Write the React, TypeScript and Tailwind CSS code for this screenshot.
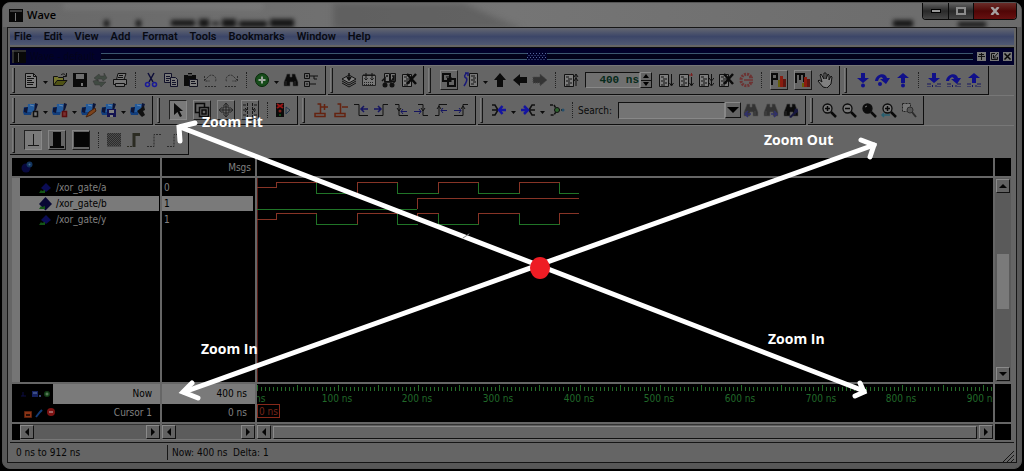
import type { ReactNode } from 'react';

const MENUS = ['File', 'Edit', 'View', 'Add', 'Format', 'Tools', 'Bookmarks', 'Window', 'Help'];

// x position of one nanosecond on the time axis
const PX_PER_NS = 0.8065;

const doc = (
  <g>
    <path d="M2.5 1.5h8l3 3v11h-11z" fill="#7d7d7d" stroke="#111" />
    <path d="M10.5 1.5v3h3M4 4.5h4M4 6.5h7M4 8.5h5M4 10.5h7M4 12.5h6" fill="none" stroke="#111" />
  </g>
);
const page = (
  <g>
    <path d="M1.5 2.5h9v12h-9z" fill="#7d7d7d" stroke="#111" />
    <path d="M3 5h3M5 7h4M3 9h4M5 11h4M3 13h4" stroke="#111" />
  </g>
);
const cube = (
  <g>
    <path d="M1 5h9l-2 8H1l-1-3z" fill="#123e7c" />
    <path d="M5 2h7l-1 8H4z" fill="#235a9b" />
    <path d="M12 1l3 1-2 6-2 2zM1 6l4-1-1 6-3-1z" fill="#0c1436" />
    <path d="M7 3l4 1" stroke="#6489b3" />
  </g>
);
const lens = (
  <g>
    <circle cx="6.5" cy="6.5" r="4.5" fill="#777" stroke="#0b0b0b" strokeWidth="1.3" />
    <path d="M10 10l5 5" stroke="#0b0b0b" strokeWidth="2.5" />
  </g>
);
const binoculars = (
  <path d="M4 2h3v3h2V2h3l1 3 2 5v4h-5v-4H7v4H1v-4l2-5zM3 9v4M12 9v4" fill="#0b0b0b" stroke="#444" strokeWidth=".6" />
);
const step = <path d="M6 1h4v5h4l-6 5-6-5h4z" fill="#10108a" />;
const stepOver = (
  <path d="M0 9C1 1 11 0 12 6h3l-4 6-6-5h3C7 4 4 5 3 9z" fill="#10108a" />
);
const up = <path d="M6 11V6H2l6-5 6 5h-4v5z" fill="#10108a" />;
const bits = <path d="M2 11v4M4 11v4M6.500 13v2M10 13v2M12 11v4M14 11v4" stroke="#161660" strokeDasharray="2 1" />;

const ICONS: Record<string, ReactNode> = {
  doc,
  open: (
    <g>
      <path d="M1.500 13V4.500h4l1 1h5V8" fill="#75752e" stroke="#111" />
      <path d="M1.500 13.500L5 8.500h10l-4 5z" fill="#4f5214" stroke="#111" />
      <path d="M9 3c2-2 4-1 5 1M14.500 1v3.500H11" fill="none" stroke="#111" />
    </g>
  ),
  save: (
    <g>
      <path d="M1 1h14v14H1z" fill="#0b0b0b" />
      <path d="M4 2h8v5H4z" fill="#6f6f6f" />
      <path d="M9 11h2v3H9z" fill="#777" />
    </g>
  ),
  refresh: <path d="M2 6l5-4 1 2h4V1l3 5-4 3-1-2H6v2zM14 10l-5 5-1-2H3l-2-4 5-1 1 2h4z" fill="#404a42" stroke="#363636" strokeWidth=".5" />,
  print: (
    <g stroke="#111" fill="#777">
      <path d="M4.500 7.500l1.500-6h8l-2 6z" />
      <path d="M1.500 7.500h13v5h-13z" />
      <path d="M3.500 11.500h9v3h-9zM7 3.500h4M6 5.500h5" />
    </g>
  ),
  cut: (
    <g fill="none">
      <path d="M5 1l5 9M11 1L6 10" stroke="#0d0d38" strokeWidth="1.500" />
      <circle cx="4.500" cy="12.500" r="2" stroke="#1a1a99" strokeWidth="1.500" />
      <circle cx="11.500" cy="12.500" r="2" stroke="#1a1a99" strokeWidth="1.500" />
    </g>
  ),
  copy: (
    <g stroke="#101028" fill="#787878">
      <path d="M1.500 1.500h7v9h-7zM3 4.500h4M3 6.500h4M3 8.500h3" />
      <path d="M7.500 5.500h5l2 2v7h-7zM9 8.500h3M9 10.500h4M9 12.500h4" />
    </g>
  ),
  paste: (
    <g>
      <path d="M1 3h4V1h4v2h4v11H1z" fill="#0b0b0b" />
      <path d="M5 3h4" stroke="#888" />
      <path d="M6.500 7.500h8v7h-8zM8 9.500h4M8 11.500h5" fill="#7d7d7d" stroke="#10101c" />
    </g>
  ),
  undo: <path d="M1.500 4v5h5M2 8l4-4c4-3 9 2 6 6M2 14.500h12" fill="none" stroke="#2d2d2d" strokeDasharray="2 1" />,
  redo: <path d="M14.500 4v5h-5M14 8l-4-4C6 1 1 6 4 10M2 14.500h12" fill="none" stroke="#2d2d2d" strokeDasharray="2 1" />,
  plus: (
    <g>
      <circle cx="8" cy="8" r="6.500" fill="#174d1b" stroke="#062808" />
      <path d="M8 4.500v7M4.500 8h7" stroke="#a0a8a0" strokeWidth="2" />
    </g>
  ),
  find: binoculars,
  tree: <path d="M1.500 1.500h5v5h-5zM1.500 9.500h5v5h-5zM3 4h2M4 3v2M3 12h2M7 4h8M7 12h6M11 4v3h3" fill="none" stroke="#111" />,
  stack: (
    <g stroke="#111">
      <path d="M1 11l7 4 7-4M1 9l7 4 7-4" fill="none" />
      <path d="M1 7l7-4 7 4-7 4z" fill="#808080" />
      <path d="M8 1v6M6 5l2 3 2-3" fill="none" strokeWidth="1.500" />
    </g>
  ),
  calendar: (
    <g>
      <path d="M1.500 3.500h13v10h-13z" fill="#777" stroke="#222" />
      <path d="M2 3h12M5 1v5M11 1v5M3.500 6l1.500 2 1.500-2M9.500 6l1.500 2 1.500-2" stroke="#111" fill="none" />
      <path d="M3 10.500h10M3 12.500h10" stroke="#222" strokeDasharray="1 1" />
    </g>
  ),
  sheets: (
    <g>
      <path d="M3.500 1.500h5v8h-5zM9.500 1.500h5v8h-5z" fill="#777" stroke="#111" />
      <path d="M1 9l3-3v4h6l3-5v6M5 4h2M11 4h2" fill="none" stroke="#111" strokeWidth="1.500" />
      <circle cx="4" cy="13" r="2.500" fill="#111" />
      <circle cx="11" cy="13" r="2.500" fill="#111" />
    </g>
  ),
  stop: (
    <g>
      {page}
      <path d="M6 2l9 10M15 2L6 12" stroke="#0b0b0b" strokeWidth="2.500" />
    </g>
  ),
  windows: (
    <g fill="none" stroke="#0b0b0b" strokeWidth="2">
      <path d="M2 2h7v7H2z" />
      <path d="M7 7h7v7H7z" />
      <path d="M5 5h5v5" strokeWidth="1" />
    </g>
  ),
  restart: (
    <g>
      <path d="M6.500 1.500h8v13h-8z" fill="#777" stroke="#111" />
      <path d="M8 4h4M10 6h3M8 8h4M10 10h3M8 12h3" stroke="#111" />
      <path d="M4 1C1 3 1 5 3 6S3 11 1 14M2 1h3v3" fill="none" stroke="#191978" strokeWidth="1.500" />
    </g>
  ),
  arrowUp: <path d="M5 15V8H2l6-7 6 7h-3v7z" fill="#0b0b0b" />,
  arrowLeft: <path d="M15 5v6H8v3L1 8l7-6v3z" fill="#0b0b0b" />,
  arrowRight: <path d="M1 5v6h7v3l7-6-7-6v3z" fill="#343434" stroke="#484848" strokeDasharray="1 1" />,
  runTop: (
    <g>
      {page}
      <path d="M13 14V3M11 5l2-3 2 3M11 9l2-3 2 3" fill="none" stroke="#111" />
    </g>
  ),
  run: (
    <g>
      {page}
      <path d="M13.500 2v11M11.500 11l2 3 2-3" fill="none" stroke="#111" />
    </g>
  ),
  runRed: (
    <g>
      {page}
      <path d="M13.500 5v8M11.500 11l2 3 2-3" fill="none" stroke="#111" />
      <path d="M13.500 1v3M11 3h4" stroke="#7a2020" />
    </g>
  ),
  runAll: (
    <g>
      {page}
      <path d="M13.500 2v11M11 6l2.500 3L16 6M11 11l2.500 3 2.500-3" fill="none" stroke="#111" />
    </g>
  ),
  breakRun: (
    <g fill="none" stroke="#6d3333">
      <path d="M13 5C11 0 3 2 3 8s7 8 10 3" strokeWidth="3" strokeDasharray="2 1" />
      <path d="M6 8h9M11 5.500h4M11 10.500h4" strokeWidth="1.500" />
    </g>
  ),
  profile: (
    <g>
      <path d="M1 13V2h5v5H2" fill="none" stroke="#0b0b0b" strokeWidth="2" />
      <path d="M7 15V8h2v7z" fill="#655e0b" />
      <path d="M9 15V4h3v11z" fill="#8a1c10" />
      <path d="M12 15V7h3v8z" fill="#5d1712" />
    </g>
  ),
  memory: (
    <g>
      <path d="M1 11V2h8v8M5 2v6" fill="none" stroke="#0b0b0b" strokeWidth="2" />
      <path d="M7 15v-4h2v4z" fill="#655e0b" />
      <path d="M9 15V5h3v10z" fill="#8a1c10" />
      <path d="M12 15V7h3v8z" fill="#5d1712" />
    </g>
  ),
  hand: <path d="M6 15L1 9l1-1 3 2-2-7 1-1 3 5V1h2v6l2-5 1 1v5l2-4 1 1-1 7-4 4z" fill="#808080" stroke="#111" />,
  stepInto: (
    <g>
      {step}
      <circle cx="8" cy="13.500" r="2" fill="#10108a" />
    </g>
  ),
  stepOver: (
    <g>
      {stepOver}
      <circle cx="5" cy="12" r="2" fill="#10108a" />
    </g>
  ),
  stepOut: (
    <g>
      {up}
      <circle cx="8" cy="13.500" r="2" fill="#10108a" />
    </g>
  ),
  bitsInto: <g>{step}{bits}</g>,
  bitsOver: <g>{stepOver}{bits}</g>,
  bitsOut: <g>{up}{bits}</g>,
  cubeDoc: (
    <g>
      {cube}
      <path d="M10.500 9.500h4v5h-4z" fill="#777" stroke="#111" strokeWidth="1.500" />
    </g>
  ),
  cubeRed: (
    <g>
      {cube}
      <path d="M10.500 9.500h4v5h-4z" fill="#7a3030" stroke="#5b0e0e" strokeWidth="1.500" />
    </g>
  ),
  cubeEdit: (
    <g>
      {cube}
      <path d="M5 15l3-5 6-4 1 3-5 4z" fill="#7d431b" stroke="#45210b" />
    </g>
  ),
  cubeSave: (
    <g>
      {cube}
      <path d="M6 7h9v8H6z" fill="#131350" />
      <path d="M8 8h5v3H8zM9 13h3v2H9z" fill="#808080" />
    </g>
  ),
  cubeDark: (
    <g>
      {cube}
      <path d="M7 9l7-5 1 4-2 1 2 4-3 2-2-2z" fill="#111" />
    </g>
  ),
  pointer: <path d="M4 1l9 8H9.500l2.500 5-2 1-2.500-5L4 13z" fill="#0b0b0b" />,
  zoomMode: <path d="M1.500 6V1.500h9V5M5 10.500H1.500V6M5.500 5.500h9v9h-9zM8 8h4v4H8z" fill="none" stroke="#0b0b0b" strokeWidth="1.500" />,
  pan: <path d="M8 1v14M1 8h14M5.500 4L8 1l2.500 3M5.500 12L8 15l2.500-3M4 5.500L1 8l3 2.500M12 5.500L15 8l-3 2.500M5 5h6v6H5z" fill="none" stroke="#262626" />,
  twoCursor: <path d="M5.500 1v14M10.500 1v14M1 3h3M12 3h3M1 8h4M11 8h4M1 13h3M12 13h3M3 6l2 2-2 2M13 6l-2 2 2 2" fill="none" stroke="#161616" strokeDasharray="3 1" />,
  traffic: (
    <g>
      <path d="M1 1h8v14H1z" fill="#0b0b0b" />
      <path d="M2 2l6 4M8 2L2 6" stroke="#991515" strokeWidth="2" />
      <circle cx="5" cy="9" r="1.500" fill="#80211a" />
      <circle cx="5" cy="13" r="1" fill="#155d20" />
      <path d="M11 5l4 3-4 4z" fill="none" stroke="#24384e" />
    </g>
  ),
  cursorAdd: <path d="M2 14.500h10v-3H2zM7.500 11V2h-3M8 5h7M11.500 2v6" fill="none" stroke="#642310" strokeWidth="1.500" />,
  cursorDel: <path d="M2 14.500h10v-3H2zM7.500 11V2h-3M9 5h6" fill="none" stroke="#642310" strokeWidth="1.500" />,
  edgePrev: (
    <g fill="none">
      <path d="M1 2.500h5v11h9" stroke="#111" />
      <path d="M15 7H8M11 4L8 7l3 3" stroke="#151560" strokeWidth="1.500" />
    </g>
  ),
  edgeNext: (
    <g fill="none">
      <path d="M2 13.500h8v-11h5" stroke="#111" />
      <path d="M1 7h7M5 4l3 3-3 3" stroke="#151560" strokeWidth="1.500" />
    </g>
  ),
  fallPrev: (
    <g fill="none">
      <path d="M2 2.500h4v11h9M4 6l2 3 2-3" stroke="#111" />
      <path d="M14 9.500H8M10 7l-2 2.500 2 2.500" stroke="#151560" />
    </g>
  ),
  fallNext: (
    <g fill="none">
      <path d="M5 2.500h5v11h5M8 6l2 3 2-3" stroke="#111" />
      <path d="M1 9.500h7M6 7l2 2.500L6 12" stroke="#151560" />
    </g>
  ),
  risePrev: (
    <g fill="none">
      <path d="M2 13.500h4v-11h8M4 7l2-3 2 3" stroke="#111" />
      <path d="M14 8.500H8M10 6L8 8.500l2 2.500" stroke="#151560" />
    </g>
  ),
  riseNext: (
    <g fill="none">
      <path d="M1 13.500h9v-11h5M8 7l2-3 2 3" stroke="#111" />
      <path d="M1 8.500h7M6 6l2 2.500L6 11" stroke="#151560" />
    </g>
  ),
  driver: (
    <g fill="none" strokeWidth="1.500">
      <path d="M1 3h3l3 5-3 5H1M1 8h5" stroke="#111" />
      <path d="M15 8H8M11.500 4L8 8l3.500 4" stroke="#1515a0" strokeWidth="2.500" />
    </g>
  ),
  reader: (
    <g fill="none" strokeWidth="1.500">
      <path d="M15 3h-3L9 8l3 5h3M10 8h5" stroke="#111" />
      <path d="M1 8h6M4 4l4 4-4 4" stroke="#1515a0" strokeWidth="2.500" />
    </g>
  ),
  trace: (
    <g>
      <path d="M1 3h4l3 5-3 5H1M8 8h6" fill="none" stroke="#111" strokeWidth="1.500" strokeDasharray="3 1" />
      <circle cx="8" cy="8" r="2.500" fill="#2d612d" stroke="#111" />
      <circle cx="14" cy="8" r="1.500" fill="#244e6b" />
    </g>
  ),
  findPrev: (
    <g>
      <g opacity=".55">{binoculars}</g>
      <path d="M8 12H2M5 9l-3 3 3 3" fill="none" stroke="#30306a" strokeWidth="1.500" />
    </g>
  ),
  findNext: (
    <g>
      <g opacity=".55">{binoculars}</g>
      <path d="M8 12h6M11 9l3 3-3 3" fill="none" stroke="#30306a" strokeWidth="1.500" />
    </g>
  ),
  findOpts: (
    <g>
      {binoculars}
      <path d="M6 15l5-5 1-4 2 2 1-2v4l-3 2-4 4z" fill="#17173f" />
    </g>
  ),
  zoomIn: <g>{lens}<path d="M6.500 4v5M4 6.500h5" stroke="#0b0b0b" strokeWidth="1.500" /></g>,
  zoomOut: <g>{lens}<path d="M4 6.500h5" stroke="#0b0b0b" strokeWidth="1.500" /></g>,
  zoomFull: <g>{lens}<circle cx="6.500" cy="6.500" r="4.500" fill="#0b0b0b" /><path d="M4 5l2-1" stroke="#777" /></g>,
  zoomCursor: (
    <g>
      {lens}
      <path d="M6.500 4v5M4 6.500h5" stroke="#0b0b0b" strokeWidth="1.500" />
      <path d="M1 13h8M3 11l-2 2 2 2" fill="none" stroke="#275f70" strokeWidth="1.500" />
    </g>
  ),
  zoomRange: (
    <g>
      <path d="M1.500 1.500h8v8h-8z" fill="#777" stroke="#222" strokeDasharray="2 1" />
      <circle cx="9" cy="8" r="3" fill="#555" stroke="#2d2d2d" />
      <path d="M11 10l4 5" stroke="#2d2d2d" strokeWidth="2" />
    </g>
  ),
  waveLine: <path d="M8.500 2v11M3 13.500h11" stroke="#161616" fill="none" />,
  waveHalf: <path d="M4 0h8v14H4zM1 14h14v2H1z" fill="#060606" />,
  waveFull: <path d="M1 0h15v15H1z" fill="#060606" />,
  hatch: (
    <g>
      <path d="M1 1h14v14H1z" fill="#4c4c4c" />
      <path d="M1 2.500h14M1 4.500h14M1 6.500h14M1 8.500h14M1 10.500h14M1 12.500h14" stroke="#2c2c2c" strokeDasharray="1 1" />
      <path d="M2 1.500h13M2 3.500h13M2 5.500h13M2 7.500h13M2 9.500h13M2 11.500h13M2 13.500h13" stroke="#2c2c2c" strokeDasharray="1 1" />
    </g>
  ),
  edgeThick: (
    <g fill="none" stroke="#2b2b22">
      <path d="M8 15V2.500h6" strokeWidth="3" />
      <path d="M1 14.500h6" strokeDasharray="2 1" />
    </g>
  ),
  edgeDots: <path d="M1 14.500h7v-12h7" fill="none" stroke="#2b2b2b" strokeDasharray="2 1" />,
};

// '|' is a separator, 'v' a drop-down caret, a leading '+' raises the button, '!' presses it
const FILE_TOOLS = ['doc', 'v', 'open', 'save', 'refresh', 'print', '|', 'cut', 'copy', 'paste', 'undo', 'redo', '|', 'plus', 'v', 'find', 'tree'];
const COMPILE_TOOLS = ['stack', 'calendar', 'sheets', 'stop'];
const RUN_TOOLS_LEFT = ['+windows', 'restart', 'v', 'arrowUp', 'arrowLeft', 'arrowRight', '|', 'runTop'];
const RUN_TOOLS_RIGHT = ['run', 'runRed', 'runAll', 'stop', 'breakRun', '|', '+profile', '+memory', 'hand'];
const STEP_TOOLS = ['stepInto', 'stepOver', 'stepOut', '|', 'bitsInto', 'bitsOver', 'bitsOut'];
const BOOKMARK_TOOLS = ['cubeDoc', 'v', 'cubeRed', 'v', 'cubeEdit', 'cubeSave', 'v', 'cubeDark'];
const MODE_TOOLS = ['!pointer', '+zoomMode', '+pan', '+twoCursor', '|', 'traffic'];
const CURSOR_TOOLS = ['cursorAdd', 'cursorDel', 'edgePrev', 'edgeNext', 'fallPrev', 'fallNext', 'risePrev', 'riseNext'];
const TRACE_TOOLS = ['driver', 'v', 'reader', 'v', 'trace', '|'];
const ZOOM_TOOLS = ['zoomIn', 'zoomOut', 'zoomFull', 'zoomCursor', 'zoomRange'];
const EXPAND_TOOLS = ['!waveLine', '+waveHalf', '+waveFull', '|', 'hatch', 'edgeThick', 'edgeDots', 'edgeDots'];

function Icon({ name }: { name: string }) {
  return (
    <svg viewBox="0 0 16 16" className="h-4 w-4 shrink-0" aria-hidden="true">
      {ICONS[name]}
    </svg>
  );
}

function Tools({ items }: { items: string[] }) {
  return (
    <>
      {items.map((item, i) => {
        if (item === '|') {
          return <span key={i} className="mx-[5px] h-4 w-px shrink-0 border-l border-dotted border-[#222]" />;
        }
        if (item === 'v') {
          return (
            <button key={i} type="button" aria-label="More" className="flex h-5 w-[9px] shrink-0 items-center justify-center">
              <svg viewBox="0 0 5 3" className="mt-1 h-[3px] w-[5px]"><path d="M0 0h5L2.500 3z" fill="#0b0b0b" /></svg>
            </button>
          );
        }
        if (item[0] === '+' || item[0] === '!') {
          const name = item.slice(1);
          return (
            <span key={i} className="flex w-6 shrink-0 justify-center">
              <button
                type="button"
                aria-label={name}
                className={
                  item[0] === '+'
                    ? 'flex h-5 w-[18px] items-center justify-center border border-b-[#1a1a1a] border-l-[#858585] border-r-[#1a1a1a] border-t-[#858585]'
                    : 'flex h-5 w-[18px] items-center justify-center border border-b-[#8a8a8a] border-l-[#222] border-r-[#8a8a8a] border-t-[#222] bg-[#7a7a7a]'
                }
              >
                <Icon name={name} />
              </button>
            </span>
          );
        }
        return (
          <button key={i} type="button" aria-label={item} className="flex h-5 w-5 shrink-0 items-center justify-center">
            <Icon name={item} />
          </button>
        );
      })}
    </>
  );
}

function ToolGroup({ children }: { children: ReactNode }) {
  return (
    <div className="mr-0.5 flex h-full shrink-0 items-center border-b border-r border-[#0e0e0e] pr-1">
      <span className="ml-0.5 mr-[6px] h-[25px] w-[3px] border-b border-l border-r border-b-[#161616] border-l-[#7c7c7c] border-r-[#161616]" />
      {children}
    </div>
  );
}

function ArrowButton({ dir }: { dir: 'left' | 'right' | 'up' | 'down' }) {
  const paths = { left: 'M6 0v8L2 4z', right: 'M2 0v8l4-4z', up: 'M0 6h8L4 2z', down: 'M0 2h8L4 6z' };
  return (
    <button
      type="button"
      aria-label={`Scroll ${dir}`}
      className="flex h-[14px] w-[14px] shrink-0 items-center justify-center border border-b-[#111] border-l-[#8a8a8a] border-r-[#111] border-t-[#8a8a8a] bg-[#626262]"
    >
      <svg viewBox="0 0 8 8" className="h-2 w-2"><path d={paths[dir]} fill="#050505" /></svg>
    </button>
  );
}

function HScroll({ solid = false }: { solid?: boolean }) {
  return (
    <div className="flex h-4 flex-1 items-center justify-between border-b border-t border-b-[#777] border-t-[#333] bg-[#5c5c5c]">
      <ArrowButton dir="left" />
      {solid && <span className="mx-0.5 h-[13px] flex-1 border border-b-[#111] border-l-[#8a8a8a] border-r-[#111] border-t-[#8a8a8a] bg-[#656565]" />}
      <ArrowButton dir="right" />
    </div>
  );
}

function SignalIcon({ large = false }: { large?: boolean }) {
  return (
    <svg viewBox="0 0 14 14" className="h-[14px] w-[14px] shrink-0" aria-hidden="true">
      <path d={large ? 'M7.500 0l6.500 7-6.500 6.500L1 7z' : 'M8 2l5 5-5 4-5-4z'} fill={large ? '#080834' : '#0b0c55'} />
      <path d="M1 12l2-3 1 1 3-1v3z" fill="#135416" />
    </svg>
  );
}

const SIGNALS = [
  { name: '/xor_gate/a', value: '0', selected: false },
  { name: '/xor_gate/b', value: '1', selected: true },
  { name: '/xor_gate/y', value: '1', selected: false },
];

function SignalTable() {
  return (
    <div className="flex w-[245px] shrink-0 flex-col">
      <table className="w-full table-fixed border-separate border-spacing-0 leading-[15px] text-[#808080]">
        <colgroup>
          <col className="w-[150px]" />
          <col />
        </colgroup>
        <thead>
          <tr className="h-5">
            <th className="border-b-2 border-r-2 border-[#666] p-0 text-left">
              <svg viewBox="0 0 14 14" className="ml-2 h-[14px] w-[14px]" role="img" aria-label="Signals">
                <circle cx="6" cy="8" r="4.500" fill="#08093f" />
                <circle cx="9.500" cy="4.500" r="3" fill="#12345e" />
                <circle cx="9.500" cy="4.500" r="1" fill="#4b7391" />
              </svg>
            </th>
            <th className="border-b-2 border-r-2 border-[#666] p-0 pr-1 text-right font-normal">Msgs</th>
          </tr>
        </thead>
        <tbody>
          {SIGNALS.map((s, i) => (
            <tr key={s.name} className={i === 0 ? 'h-[17px] align-bottom' : 'h-4 align-bottom'}>
              <td className="border-l-8 border-r-2 border-l-[#757575] border-r-[#666] p-0 pr-px">
                <div className={s.selected ? 'flex items-center gap-1 bg-[#7a7a7a] pl-[18px] text-black' : 'flex items-center gap-1 pl-[18px]'}>
                  <SignalIcon large={s.selected} />
                  {s.name}
                </div>
              </td>
              <td className="border-r-2 border-[#666] p-0 pr-0.5">
                <div className={s.selected ? 'bg-[#7a7a7a] pl-0.5 text-black' : 'pl-0.5'}>{s.value}</div>
              </td>
            </tr>
          ))}
        </tbody>
      </table>
      <div className="flex flex-1">
        <span className="w-[150px] border-l-8 border-r-2 border-l-[#757575] border-r-[#666]" />
        <span className="flex-1 border-r-2 border-[#666]" />
      </div>
    </div>
  );
}

function Waves() {
  return (
    <div className="flex min-w-0 flex-1 flex-col">
      <div className="h-5 border-b-2 border-[#666]" />
      <svg className="min-h-0 w-full flex-1" height="100%" fill="none" shapeRendering="crispEdges" role="img" aria-label="Waveforms">
        <path d="M.5 0v2000" stroke="#5a1a14" />
        <g stroke="#873426">
          <path d="M0 9.500h19.500v-5h40M100.500 15V4.500h40M181.500 15V4.500h40M262.500 15V4.500h40" />
          <path d="M160.500 31V20.500h161" />
          <path d="M0 41.500h19.500v-6h40M100.500 46V35.500h40M160.500 40V35.500h21M221.500 46V35.500h41M302.500 46V35.500h19" />
        </g>
        <g stroke="#207427">
          <path d="M59.500 5v10.500h41M140.500 5v10.500h41M221.500 5v10.500h41M302.500 5v10.500h19" />
          <path d="M0 31.500h160" />
          <path d="M59.500 36v10.500h41M140.500 36v10.500h20M181.500 36v10.500h40M262.500 36v10.500h40" />
        </g>
      </svg>
    </div>
  );
}

function Timeline() {
  const ticks = Array.from({ length: 183 }, (_, i) => i);
  return (
    <svg className="h-[38px] min-w-0 flex-1" role="img" aria-label="Time axis">
      <g shapeRendering="crispEdges">
        {ticks.map((i) => (
          <path key={i} d={`M${Math.round(i * 5 * PX_PER_NS)}.5 ${i % 10 === 0 ? 1 : 3}V7`} stroke="#246b28" />
        ))}
      </g>
      <g fill="#21692a" fontSize="10" textAnchor="middle">
        {Array.from({ length: 10 }, (_, i) => i * 100).map((t) => (
          <text key={t} x={Math.round(t * PX_PER_NS) - 1} y="18">{t} ns</text>
        ))}
      </g>
      <rect x=".5" y="20.500" width="22" height="13" fill="#000" stroke="#86291a" />
      <text x="2" y="31" fontSize="10" fill="#762519">0 ns</text>
    </svg>
  );
}

function CursorTable() {
  return (
    <table className="w-[245px] shrink-0 table-fixed border-separate border-spacing-0 leading-[14px]">
      <colgroup>
        <col className="w-[41px]" />
        <col className="w-[109px]" />
        <col />
      </colgroup>
      <tbody>
        <tr className="h-5 text-black">
          <td className="p-0">
            <svg viewBox="0 0 40 14" className="h-[14px] w-10" aria-hidden="true">
              <path d="M9 9h5M11 5v4" stroke="#0c0c44" />
              <path d="M20 4h6v6h-6z" fill="#15215f" />
              <path d="M21 6h4M27 9h2" stroke="#4b5d91" strokeWidth="1.500" />
              <circle cx="35" cy="7" r="3" fill="#123e16" />
              <path d="M33.500 7h3M35 5.500v3" stroke="#6c8a6c" />
            </svg>
          </td>
          <td className="border-r-2 border-[#666] bg-[#7a7a7a] p-0 pr-2 text-right">Now</td>
          <td className="border-r-2 border-[#666] bg-[#7a7a7a] p-0 pr-2 text-right">400 ns</td>
        </tr>
        <tr className="h-[18px] text-[#808080]">
          <td className="p-0">
            <svg viewBox="0 0 41 14" className="h-[14px] w-[41px]" overflow="visible" aria-hidden="true">
              <path d="M12.500 5.500h7v6h-7z" fill="#8a3416" stroke="#5b200c" />
              <path d="M14 8h4v2h-4z" fill="#2b0e06" />
              <path d="M24 11l4-5 2-2" stroke="#123c77" strokeWidth="2" />
              <circle cx="39" cy="6" r="4" fill="#7c1212" />
              <path d="M37 6h4" stroke="#b08080" strokeWidth="1.500" />
            </svg>
          </td>
          <td className="border-r-2 border-[#666] p-0 pr-2 text-right">Cursor 1</td>
          <td className="border-r-2 border-[#666] p-0 pr-2 text-right">0 ns</td>
        </tr>
      </tbody>
    </table>
  );
}

function TitleBar() {
  return (
    <div className="relative flex h-6 items-center overflow-hidden rounded-t-md bg-gradient-to-r from-[#686868] via-[#757575] to-[#6b6b6b] pl-1.5">
      <svg className="absolute inset-0 h-full w-full" aria-hidden="true">
        <g className="blur-[3px]">
          <path d="M330 0h130q30 14 60 26H330z" fill="#505050" opacity=".5" />
          <path d="M60 0h200v6H60z" fill="#999" opacity=".3" />
        </g>
        <g className="blur-[2px]" fill="#151515">
          <path d="M101 17h5v7h-5zM133 17h5v7h-5zM168 17h24v6h-24zM196 16h10v8h-10zM209 19h7v3h-7zM219 16h14v8h-14zM236 18h28v6h-28zM267 16h24v8h-24z" />
          <path d="M890 17h20v7h-20zM955 19h28v5h-28z" />
        </g>
      </svg>
      <svg viewBox="0 0 14 13" className="relative h-[13px] w-[14px]" aria-hidden="true">
        <path d="M0 0h14v13H0z" fill="#080808" />
        <path d="M1 2h12M6.500 4v8" stroke="#777" />
      </svg>
      <h1 className="relative ml-1 font-['Open_Sans',sans-serif] text-[11px] font-semibold text-black">Wave</h1>
      <div className="absolute right-1 top-0 flex h-[17px] overflow-hidden rounded-b-sm border border-t-0 border-[#0a0a0a]">
        <button type="button" aria-label="Minimize" className="flex w-[26px] items-center justify-center border-r border-[#0a0a0a] bg-gradient-to-b from-[#626262] via-[#292929] to-[#454545]">
          <span className="h-1 w-[10px] border border-black bg-[#999]" />
        </button>
        <button type="button" aria-label="Maximize" className="flex w-[25px] items-center justify-center border-r border-[#0a0a0a] bg-gradient-to-b from-[#626262] via-[#292929] to-[#454545]">
          <span className="flex h-2 w-[10px] items-center justify-center border-2 border-[#8c8c8c]" />
        </button>
        <button type="button" aria-label="Close" className="flex w-[42px] items-center justify-center bg-gradient-to-b from-[#6a2b27] via-[#500606] to-[#671010]">
          <svg viewBox="0 0 10 8" className="h-2 w-[10px]"><path d="M1.500 0l7 8M8.500 0l-7 8" stroke="#a5a0a0" strokeWidth="2.500" /></svg>
        </button>
      </div>
    </div>
  );
}

function DockBar() {
  return (
    <div className="mt-0.5 flex h-[18px] items-center border-t border-[#0a0a0a] bg-[#01012b] px-0.5">
      <svg viewBox="0 0 14 13" className="h-[13px] w-[14px]" aria-hidden="true">
        <path d="M0 0h14v13H0z" fill="#080808" />
        <path d="M0 1h14M6.500 3v9M1 0v13" stroke="#555" />
      </svg>
      <span className="ml-1 w-[71px] leading-[14px] text-[#04041b]">Wave - default</span>
      <span className="h-[7px] flex-1 border-b border-t border-[#3c5870] bg-[#02021a]" />
      <svg viewBox="0 0 20 8" className="h-2 w-5" aria-hidden="true">
        <path d="M0 .5h20M0 4.500h20" stroke="#52669c" strokeDasharray="1 2" />
        <path d="M1.500 2.500h18M1.500 6.500h18" stroke="#52669c" strokeDasharray="1 2" />
      </svg>
      <span className="h-[7px] flex-1 border-b border-t border-[#3c5870] bg-[#02021a]" />
      <div className="ml-1 flex gap-1">
        <button type="button" aria-label="Add" className="h-[9px] w-[9px] bg-[#777]">
          <svg viewBox="0 0 9 9"><path d="M4.500 1v7M1 4.500h7M2 2.500h5" stroke="#111" /></svg>
        </button>
        <button type="button" aria-label="Undock" className="h-[9px] w-[9px] bg-[#777]">
          <svg viewBox="0 0 9 9"><path d="M5 1.500H1.500v6h6V5M3.500 3v3h3M4 5.500L8 1" stroke="#111" fill="none" /></svg>
        </button>
        <button type="button" aria-label="Close pane" className="h-[9px] w-[9px] bg-[#777]">
          <svg viewBox="0 0 9 9"><path d="M1.500 1.500l6 6M7.500 1.500l-6 6" stroke="#050505" strokeWidth="1.500" /></svg>
        </button>
      </div>
    </div>
  );
}

function Toolbars() {
  return (
    <div className="bg-[#656565]">
      <div className="flex h-[30px] border-t border-[#777]">
        <ToolGroup><Tools items={FILE_TOOLS} /></ToolGroup>
        <ToolGroup><Tools items={COMPILE_TOOLS} /></ToolGroup>
        <ToolGroup>
          <Tools items={RUN_TOOLS_LEFT} />
          <input
            aria-label="Run length"
            defaultValue="400 ns"
            className="ml-1 h-4 w-[55px] border border-b-[#888] border-l-[#111] border-r-[#888] border-t-[#111] bg-[#707070] text-right font-['Liberation_Mono',monospace] text-[11px] font-bold text-[#062a1a] outline-none"
          />
          <div className="mr-1 flex h-4 w-3 flex-col border border-b-[#111] border-l-[#888] border-r-[#111] border-t-[#888]">
            <button type="button" aria-label="Increase" className="flex flex-1 items-center justify-center border-b border-[#111]">
              <svg viewBox="0 0 6 4" className="h-1 w-[6px]"><path d="M0 4h6L3 0z" /></svg>
            </button>
            <button type="button" aria-label="Decrease" className="flex flex-1 items-center justify-center">
              <svg viewBox="0 0 6 4" className="h-1 w-[6px]"><path d="M0 0h6L3 4z" /></svg>
            </button>
          </div>
          <Tools items={RUN_TOOLS_RIGHT} />
        </ToolGroup>
        <ToolGroup><Tools items={STEP_TOOLS} /></ToolGroup>
      </div>
      <div className="flex h-[30px] border-t border-[#777]">
        <ToolGroup><Tools items={BOOKMARK_TOOLS} /></ToolGroup>
        <ToolGroup><Tools items={MODE_TOOLS} /></ToolGroup>
        <ToolGroup><Tools items={CURSOR_TOOLS} /></ToolGroup>
        <ToolGroup>
          <Tools items={TRACE_TOOLS} />
          <label htmlFor="search" className="w-10 text-[#0a0a0a]">Search:</label>
          <input id="search" className="h-[17px] w-[107px] border border-b-[#888] border-l-[#111] border-r-[#888] border-t-[#111] bg-[#747474] px-1 outline-none" />
          <button type="button" aria-label="Search history" className="flex h-4 w-4 items-center justify-center border border-b-[#111] border-l-[#888] border-r-[#111] border-t-[#888]">
            <svg viewBox="0 0 12 6" className="h-[6px] w-3"><path d="M0 0h12L6 6z" /></svg>
          </button>
          <Tools items={['findPrev', 'findNext', 'findOpts']} />
        </ToolGroup>
        <ToolGroup><Tools items={ZOOM_TOOLS} /></ToolGroup>
      </div>
      <div className="flex h-[30px] border-t border-[#777]">
        <ToolGroup><Tools items={EXPAND_TOOLS} /></ToolGroup>
      </div>
    </div>
  );
}

function Annotations() {
  return (
    <svg
      viewBox="0 0 1024 471"
      className="pointer-events-none absolute inset-0 h-full w-full"
      fill="none"
      stroke="#fff"
      strokeWidth="5"
      strokeLinecap="round"
    >
      <path d="M180 127L864 391M184 392L874 145" />
      <path d="M195 123L179 127l1 14M861 140l13 5-4 12M192 383l-9 9 15 6M860 383l4 9-9 4" />
      <path d="M463 238l6-4" stroke="#888" strokeWidth="1" />
      <ellipse cx="540" cy="268" rx="10" ry="11" fill="#ee1c24" stroke="none" />
      <g fill="#fff" stroke="none" fontSize="14" fontWeight="700" fontFamily="'Open Sans', sans-serif">
        <text x="202" y="127">Zoom Fit</text>
        <text x="764" y="145">Zoom Out</text>
        <text x="201" y="354">Zoom In</text>
        <text x="768" y="344">Zoom In</text>
      </g>
    </svg>
  );
}

export default function App() {
  return (
    <div className="relative flex min-h-screen flex-col overflow-hidden bg-black p-0.5 font-['DejaVu_Sans_Condensed','DejaVu_Sans',sans-serif] text-[10px]">
      <div className="flex flex-1 flex-col rounded-lg border border-[#555] bg-[#585858]">
        <TitleBar />
        <div className="mx-1 mb-[5px] flex flex-1 flex-col border border-[#161616] bg-[#656565] px-0.5">
          <nav className="flex h-[17px] items-center gap-3 bg-gradient-to-b from-[#656770] via-[#3c4668] to-[#505973] pl-1 font-['Roboto',sans-serif] text-[11px] font-semibold text-[#080a12]">
            {MENUS.map((m) => (
              <button key={m} type="button" className="leading-4">{m}</button>
            ))}
          </nav>
          <DockBar />
          <Toolbars />

          <main className="ml-0.5 mr-[3px] mt-[3px] flex flex-1 flex-col bg-black">
            <div className="flex flex-1">
              <SignalTable />
              <Waves />
              <div className="flex w-[18px] flex-col border-l-2 border-[#666]">
                <div className="h-5 shrink-0 border-b-2 border-[#666]" />
                <div className="flex flex-1 flex-col items-center bg-[#5a5a5a] py-px">
                  <ArrowButton dir="up" />
                  <span className="w-3 flex-[60]" />
                  <span className="w-3 flex-[54] bg-[#7a7a7a]" />
                  <span className="w-3 flex-[57]" />
                  <ArrowButton dir="down" />
                </div>
              </div>
            </div>
            <div className="flex border-b-2 border-t-2 border-[#666]">
              <CursorTable />
              <Timeline />
              <span className="w-[18px] border-l-2 border-[#666]" />
            </div>
            <div className="flex">
              <div className="flex w-[150px] border-r-2 border-[#666] pl-2"><HScroll /></div>
              <div className="flex w-[95px] border-r-2 border-[#666]"><HScroll /></div>
              <div className="flex flex-1"><HScroll solid /></div>
              <span className="w-[18px] border-l-2 border-[#666]" />
            </div>
          </main>

          <footer className="mt-0.5 flex h-5 items-center border-t border-[#161616] text-[#060606]">
            <span className="w-[158px] border-r border-[#161616] pl-1.5">0 ns to 912 ns</span>
            <span className="flex-1 whitespace-pre pl-1">Now: 400 ns  Delta: 1</span>
            <svg viewBox="0 0 12 12" className="h-3 w-3 self-end" aria-hidden="true">
              <path d="M1 12L12 1M5 12l7-7M9 12l3-3" stroke="#161616" />
            </svg>
          </footer>
        </div>
      </div>
      <Annotations />
    </div>
  );
}
